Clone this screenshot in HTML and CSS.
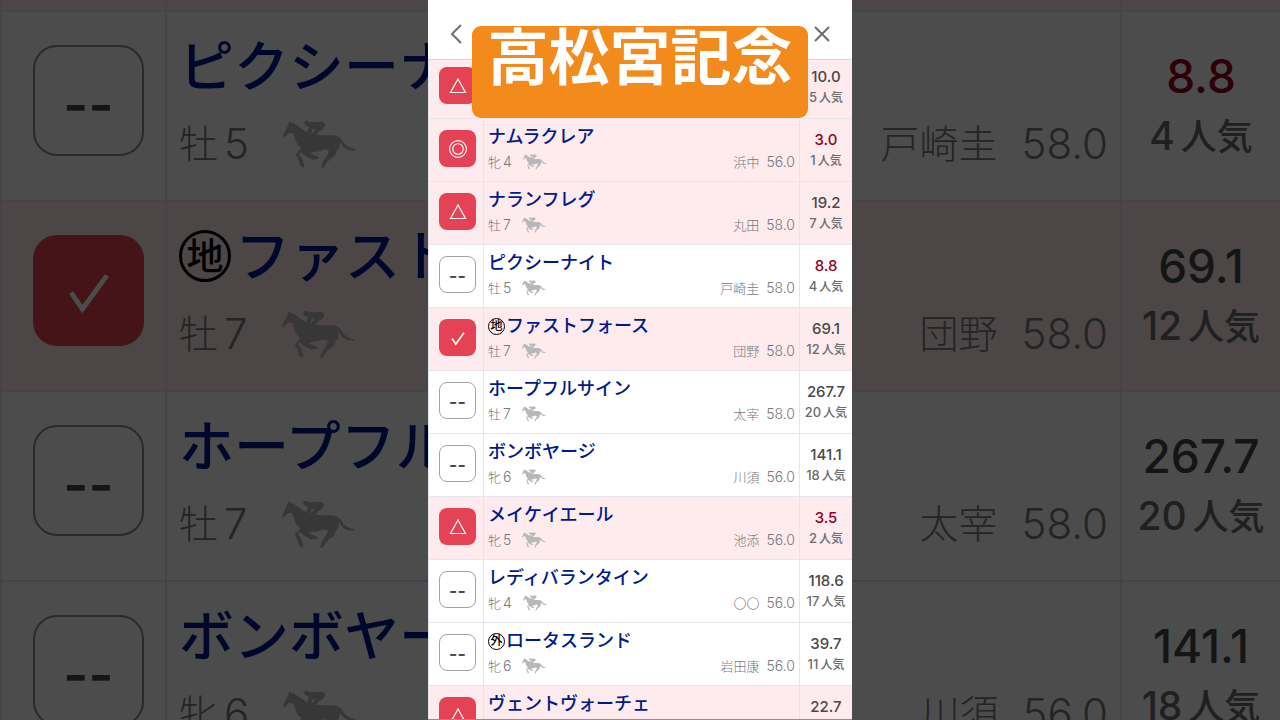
FILE: index.html
```html
<!DOCTYPE html>
<html lang="ja">
<head>
<meta charset="utf-8">
<meta name="viewport" content="width=device-width, initial-scale=1">
<title>高松宮記念</title>
<link rel="stylesheet" href="styles.css">
</head>
<body>
<svg class="sprite" aria-hidden="true">
  <symbol id="horse" viewBox="0 0 222 148">
    <path fill="currentColor" d="M2 54 L0 45 L12 22 L19 2 L24 10 L32 10 L58 28 L72 38 L78 21 L68 17 Q60 10 65 4 Q72 -1 80 7 L112 5 Q126 6 127 14 L120 28 L108 34 L100 44 L112 46 L148 46 Q170 47 179 62 Q187 83 219 88 L218 92 Q184 96 171 66 Q173 82 162 94 L156 109 Q144 116 133 127 L121 145 L114 143 L123 120 Q136 104 138 92 L122 88 Q111 96 92 96 L79 101 L104 110 L108 116 L88 120 L65 107 L51 96 L48 104 L58 119 L64 139 L60 144 L50 136 L47 122 L38 104 L55 85 L42 73 L30 40 L17 39 Z M89 27 L84 41 L94 34 L96 26 Z"/>
  </symbol>
  <symbol id="triangle" viewBox="0 0 18 18">
    <path fill="none" stroke="currentColor" stroke-width="1.2" d="M9 2 L16.500 15.500 H1.500 Z"/>
  </symbol>
  <symbol id="double-circle" viewBox="0 0 18 18">
    <circle cx="9" cy="9" r="8.400" fill="none" stroke="currentColor" stroke-width="1.100"/>
    <circle cx="9" cy="9" r="5.300" fill="none" stroke="currentColor" stroke-width="1.100"/>
  </symbol>
  <symbol id="check" viewBox="0 0 18 18">
    <path fill="none" stroke="currentColor" stroke-width="1.600" d="M3 9.500 L6.800 15 L15 3.800"/>
  </symbol>
</svg>

<div class="stage">
  <div class="backdrop" aria-hidden="true" inert>
    <table class="card card-large">
      <tbody>
        <tr class="picked">
          <td class="mark-cell"></td>
          <td class="horse-cell"></td>
          <td class="odds-cell"></td>
        </tr>
        <tr>
          <td class="mark-cell"><button class="mark" type="button">--</button></td>
          <td class="horse-cell"><div class="name">ピクシーナイト</div><div class="detail"><span class="sex">牡</span><span class="num">5</span><svg class="horse"><use href="#horse"/></svg><span class="jockey">戸崎圭</span><span class="num weight">58.0</span></div></td>
          <td class="odds-cell"><div class="odds hot">8.8</div><div class="rank"><span class="num">4</span>人気</div></td>
        </tr>
        <tr class="picked">
          <td class="mark-cell"><button class="mark on" type="button"><svg><use href="#check"/></svg></button></td>
          <td class="horse-cell"><div class="name"><span class="badge">地</span>ファストフォース</div><div class="detail"><span class="sex">牡</span><span class="num">7</span><svg class="horse"><use href="#horse"/></svg><span class="jockey">団野</span><span class="num weight">58.0</span></div></td>
          <td class="odds-cell"><div class="odds">69.1</div><div class="rank"><span class="num">12</span>人気</div></td>
        </tr>
        <tr>
          <td class="mark-cell"><button class="mark" type="button">--</button></td>
          <td class="horse-cell"><div class="name">ホープフルサイン</div><div class="detail"><span class="sex">牡</span><span class="num">7</span><svg class="horse"><use href="#horse"/></svg><span class="jockey">太宰</span><span class="num weight">58.0</span></div></td>
          <td class="odds-cell"><div class="odds">267.7</div><div class="rank"><span class="num">20</span>人気</div></td>
        </tr>
        <tr>
          <td class="mark-cell"><button class="mark" type="button">--</button></td>
          <td class="horse-cell"><div class="name">ボンボヤージ</div><div class="detail"><span class="sex">牝</span><span class="num">6</span><svg class="horse"><use href="#horse"/></svg><span class="jockey">川須</span><span class="num weight">56.0</span></div></td>
          <td class="odds-cell"><div class="odds">141.1</div><div class="rank"><span class="num">18</span>人気</div></td>
        </tr>
      </tbody>
    </table>
  </div>

  <main class="phone">
    <header class="topbar">
      <button class="nav" type="button" aria-label="戻る"><svg viewBox="0 0 20 20"><path d="M15 1 L6 10 L15 19"/></svg></button>
      <button class="nav" type="button" aria-label="閉じる"><svg viewBox="0 0 20 20"><path d="M3 3 L17 17 M17 3 L3 17"/></svg></button>
    </header>
    <h1 class="title">高松宮記念</h1>
    <table class="card">
      <tbody>
        <tr class="picked">
          <td class="mark-cell"><button class="mark on" type="button" aria-label="△"><svg><use href="#triangle"/></svg></button></td>
          <td class="horse-cell"></td>
          <td class="odds-cell"><div class="odds">10.0</div><div class="rank"><span class="num">5</span>人気</div></td>
        </tr>
        <tr class="picked">
          <td class="mark-cell"><button class="mark on" type="button" aria-label="◎"><svg><use href="#double-circle"/></svg></button></td>
          <td class="horse-cell"><div class="name">ナムラクレア</div><div class="detail"><span class="sex">牝</span><span class="num">4</span><svg class="horse"><use href="#horse"/></svg><span class="jockey">浜中</span><span class="num weight">56.0</span></div></td>
          <td class="odds-cell"><div class="odds hot">3.0</div><div class="rank"><span class="num">1</span>人気</div></td>
        </tr>
        <tr class="picked">
          <td class="mark-cell"><button class="mark on" type="button" aria-label="△"><svg><use href="#triangle"/></svg></button></td>
          <td class="horse-cell"><div class="name">ナランフレグ</div><div class="detail"><span class="sex">牡</span><span class="num">7</span><svg class="horse"><use href="#horse"/></svg><span class="jockey">丸田</span><span class="num weight">58.0</span></div></td>
          <td class="odds-cell"><div class="odds">19.2</div><div class="rank"><span class="num">7</span>人気</div></td>
        </tr>
        <tr>
          <td class="mark-cell"><button class="mark" type="button">--</button></td>
          <td class="horse-cell"><div class="name">ピクシーナイト</div><div class="detail"><span class="sex">牡</span><span class="num">5</span><svg class="horse"><use href="#horse"/></svg><span class="jockey">戸崎圭</span><span class="num weight">58.0</span></div></td>
          <td class="odds-cell"><div class="odds hot">8.8</div><div class="rank"><span class="num">4</span>人気</div></td>
        </tr>
        <tr class="picked">
          <td class="mark-cell"><button class="mark on" type="button" aria-label="✓"><svg><use href="#check"/></svg></button></td>
          <td class="horse-cell"><div class="name"><span class="badge">地</span>ファストフォース</div><div class="detail"><span class="sex">牡</span><span class="num">7</span><svg class="horse"><use href="#horse"/></svg><span class="jockey">団野</span><span class="num weight">58.0</span></div></td>
          <td class="odds-cell"><div class="odds">69.1</div><div class="rank"><span class="num">12</span>人気</div></td>
        </tr>
        <tr>
          <td class="mark-cell"><button class="mark" type="button">--</button></td>
          <td class="horse-cell"><div class="name">ホープフルサイン</div><div class="detail"><span class="sex">牡</span><span class="num">7</span><svg class="horse"><use href="#horse"/></svg><span class="jockey">太宰</span><span class="num weight">58.0</span></div></td>
          <td class="odds-cell"><div class="odds">267.7</div><div class="rank"><span class="num">20</span>人気</div></td>
        </tr>
        <tr>
          <td class="mark-cell"><button class="mark" type="button">--</button></td>
          <td class="horse-cell"><div class="name">ボンボヤージ</div><div class="detail"><span class="sex">牝</span><span class="num">6</span><svg class="horse"><use href="#horse"/></svg><span class="jockey">川須</span><span class="num weight">56.0</span></div></td>
          <td class="odds-cell"><div class="odds">141.1</div><div class="rank"><span class="num">18</span>人気</div></td>
        </tr>
        <tr class="picked">
          <td class="mark-cell"><button class="mark on" type="button" aria-label="△"><svg><use href="#triangle"/></svg></button></td>
          <td class="horse-cell"><div class="name">メイケイエール</div><div class="detail"><span class="sex">牝</span><span class="num">5</span><svg class="horse"><use href="#horse"/></svg><span class="jockey">池添</span><span class="num weight">56.0</span></div></td>
          <td class="odds-cell"><div class="odds hot">3.5</div><div class="rank"><span class="num">2</span>人気</div></td>
        </tr>
        <tr>
          <td class="mark-cell"><button class="mark" type="button">--</button></td>
          <td class="horse-cell"><div class="name">レディバランタイン</div><div class="detail"><span class="sex">牝</span><span class="num">4</span><svg class="horse"><use href="#horse"/></svg><span class="jockey">〇〇</span><span class="num weight">56.0</span></div></td>
          <td class="odds-cell"><div class="odds">118.6</div><div class="rank"><span class="num">17</span>人気</div></td>
        </tr>
        <tr>
          <td class="mark-cell"><button class="mark" type="button">--</button></td>
          <td class="horse-cell"><div class="name"><span class="badge">外</span>ロータスランド</div><div class="detail"><span class="sex">牝</span><span class="num">6</span><svg class="horse"><use href="#horse"/></svg><span class="jockey">岩田康</span><span class="num weight">56.0</span></div></td>
          <td class="odds-cell"><div class="odds">39.7</div><div class="rank"><span class="num">11</span>人気</div></td>
        </tr>
        <tr class="picked">
          <td class="mark-cell"><button class="mark on" type="button" aria-label="△"><svg><use href="#triangle"/></svg></button></td>
          <td class="horse-cell"><div class="name">ヴェントヴォーチェ</div></td>
          <td class="odds-cell"><div class="odds">22.7</div></td>
        </tr>
      </tbody>
    </table>
  </main>
</div>
</body>
</html>
```

FILE: styles.css
```css
* {
  box-sizing: border-box;
}

body {
  margin: 0;
  font-family: Inter, "Noto Sans CJK JP", sans-serif;
  color: #48484a;
}

.sprite {
  display: none;
}

.stage {
  position: relative;
  height: 100vh;
  overflow: hidden;
  display: grid;
  grid-template-columns: 428fr 424fr 428fr;
}

/* Enlarged, dimmed copy of the card behind the phone column */
.backdrop {
  position: absolute;
  inset: 0;
  overflow: hidden;
  background: #fff;
}

.backdrop::after {
  content: "";
  position: absolute;
  inset: 0;
  background: rgba(0, 0, 0, 0.7);
}

.phone {
  grid-column: 2;
  position: relative;
  height: 100vh;
  overflow: hidden;
  background: #fff;
  border-bottom: 1px solid #958d90;
}

.topbar {
  position: relative;
  z-index: 1;
  height: 60px;
  padding: 9px 20px 0 18px;
  display: flex;
  justify-content: space-between;
  align-items: center;
  background: #fff;
  border-bottom: 1px solid #dcd8dc;
}

.nav {
  width: 20px;
  height: 20px;
  padding: 0;
  border: 0;
  background: none;
  color: #6e6e70;
}

.nav svg {
  display: block;
  width: 20px;
  height: 20px;
  fill: none;
  stroke: currentColor;
  stroke-width: 2;
}

.title {
  position: absolute;
  z-index: 2;
  top: 26px;
  left: 44px;
  right: 44px;
  height: 92px;
  margin: 0;
  border-radius: 9px;
  background: #f28a1c;
  color: #fff;
  font-size: 61px;
  font-weight: 700;
  line-height: 64px;
  text-align: center;
  white-space: nowrap;
}

.card {
  --row: 63px;
  --line: 1px;
  --mark-col: 55px;
  --odds-col: 52px;
  --mark: 37px;
  --mark-radius: 8px;
  --mark-top: 11px;
  --mark-left: 10px;
  --mark-icon: 18px;
  --mark-text: 18px;
  --mark-drop: 2px;
  --cell-x: 4px;
  --name-top: 6px;
  --name: 18px;
  --name-line: 24px;
  --badge: 17px;
  --badge-text: 12px;
  --badge-line: 1px;
  --badge-gap: 1px;
  --detail-gap: 3px;
  --text: 13px;
  --digits: 14px;
  --text-line: 20px;
  --space: 2px;
  --horse-w: 24px;
  --horse-h: 16px;
  --horse-gap: 11px;
  --weight-gap: 7px;
  --odds-top: 11px;
  --odds: 15px;
  --rank: 12px;
  --rank-digits: 13px;
  width: 100%;
  margin-top: -4px;
  table-layout: fixed;
  border-spacing: 0;
  border-left: var(--line) solid #e2e6f0;
}

.card-large {
  --row: 190px;
  --line: 2px;
  --mark-col: 165px;
  --odds-col: 158px;
  --mark: 111px;
  --mark-radius: 24px;
  --mark-top: 33px;
  --mark-left: 31px;
  --mark-icon: 54px;
  --mark-text: 54px;
  --mark-drop: 8px;
  --cell-x: 12px;
  --name-top: 18px;
  --name: 55px;
  --name-line: 72px;
  --badge: 52px;
  --badge-text: 37px;
  --badge-line: 3px;
  --badge-gap: 4px;
  --detail-gap: 12px;
  --text: 39px;
  --digits: 42px;
  --text-line: 60px;
  --space: 6px;
  --horse-w: 74px;
  --horse-h: 49px;
  --horse-gap: 34px;
  --weight-gap: 24px;
  --odds-top: 34px;
  --odds: 46px;
  --rank: 36px;
  --rank-digits: 39px;
  margin-top: -178px;
}

.card tr {
  height: var(--row);
}

.card td {
  height: var(--row);
  padding: 0;
  vertical-align: top;
  border-bottom: var(--line) solid #e6e4ec;
  border-right: var(--line) solid #e6e4ec;
}

.card .odds-cell {
  width: var(--odds-col);
  padding-top: var(--odds-top);
  border-right: 0;
  text-align: center;
  white-space: nowrap;
}

.card .mark-cell {
  width: var(--mark-col);
  padding: var(--mark-top) 0 0 var(--mark-left);
}

.card .horse-cell {
  padding: var(--name-top) var(--cell-x) 0;
}

.picked {
  background: #feebee;
}

.mark {
  display: flex;
  align-items: center;
  justify-content: center;
  width: var(--mark);
  height: var(--mark);
  padding: var(--mark-drop) 0 0;
  border: 1px solid #a4a4a6;
  border-radius: var(--mark-radius);
  background: #fff;
  color: #48484a;
  font: 600 var(--mark-text) Inter, sans-serif;
}

.card-large .mark {
  border: 2px solid #8c8c8e;
}

.card .mark.on {
  padding-top: 0;
  border: 0;
  background: #e54355;
  color: #fff;
}

.mark svg {
  width: var(--mark-icon);
  height: var(--mark-icon);
}

.name {
  display: flex;
  align-items: center;
  height: var(--name-line);
  color: #001a8c;
  font-size: var(--name);
  font-weight: 500;
  line-height: var(--name-line);
  white-space: nowrap;
}

.badge {
  display: flex;
  align-items: center;
  justify-content: center;
  width: var(--badge);
  height: var(--badge);
  margin-right: var(--badge-gap);
  border: var(--badge-line) solid #000;
  border-radius: 50%;
  color: #000;
  font-size: var(--badge-text);
  line-height: 1;
}

.detail {
  display: flex;
  align-items: center;
  height: var(--text-line);
  margin-top: var(--detail-gap);
  color: #78787a;
  font-size: var(--text);
  font-weight: 300;
  line-height: var(--text-line);
  white-space: nowrap;
}

.detail .num {
  font-size: var(--digits);
}

.sex,
.rank .num {
  margin-right: var(--space);
}

.horse {
  width: var(--horse-w);
  height: var(--horse-h);
  margin-left: var(--horse-gap);
  color: #b8b8ba;
}

.jockey {
  margin-left: auto;
}

.weight {
  margin-left: var(--weight-gap);
}

.odds {
  font-size: var(--odds);
  font-weight: 500;
  line-height: var(--text-line);
}

.odds.hot {
  color: #960022;
}

.rank {
  color: #6c6c6e;
  font-size: var(--rank);
  font-weight: 500;
  line-height: var(--text-line);
}

.rank .num {
  font-size: var(--rank-digits);
}
```
